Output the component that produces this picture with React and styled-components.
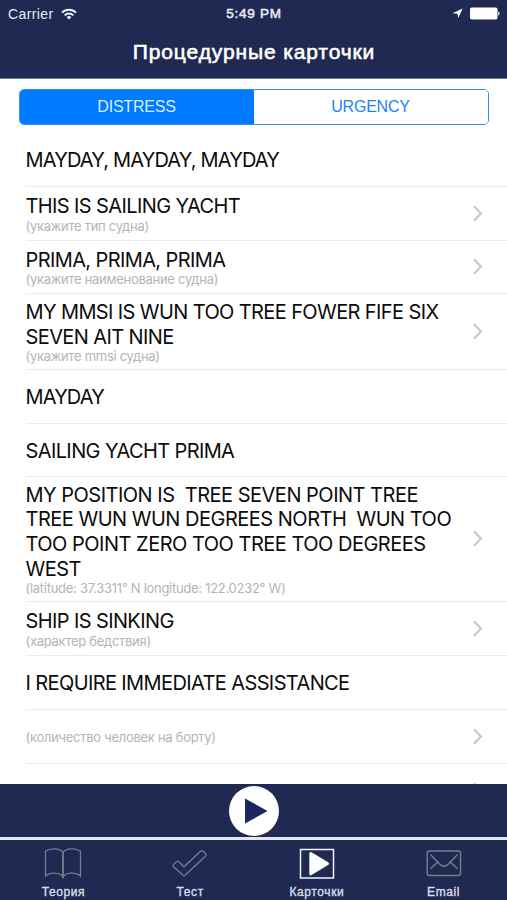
import React, { useState } from "react";
import styled, { createGlobalStyle } from "styled-components";

const GlobalStyle = createGlobalStyle`
  * {
    box-sizing: border-box;
  }
  body {
    margin: 0;
    background: #fff;
  }
  button {
    border: 0;
    margin: 0;
    padding: 0;
    background: none;
    font: inherit;
    color: inherit;
  }
`;

const Screen = styled.div`
  display: flex;
  flex-direction: column;
  width: 507px;
  height: 900px;
  overflow: hidden;
  background: #fff;
  font-family: "Liberation Sans", Arial, sans-serif;
`;

const Header = styled.header`
  flex: none;
  height: 79px;
  background: #202952;
  border-bottom: 1px solid #737894;
  color: #fff;
`;

const StatusBar = styled.div`
  display: grid;
  grid-template-columns: 1fr auto 1fr;
  align-items: center;
  height: 27px;
  padding: 0 7px 0 8px;
  font-size: 14px;
  color: #e9ebf3;
`;

const StatusSide = styled.div`
  display: flex;
  align-items: center;
  justify-content: ${(props) => (props.$end ? "flex-end" : "flex-start")};
  gap: 7px;
  letter-spacing: 0.4px;
`;

const Time = styled.div`
  font-size: 13.5px;
  letter-spacing: 0.75px;
  -webkit-text-stroke: 0.5px currentColor;
`;

const Title = styled.h1`
  margin: 0;
  padding: 13px 0 0 1px;
  text-align: center;
  font-size: 21px;
  line-height: 24px;
  font-weight: normal;
  letter-spacing: 0.88px;
  -webkit-text-stroke: 0.6px currentColor;
`;

const Segments = styled.div`
  flex: none;
  display: flex;
  height: 36px;
  margin: 10px 18px 7px 19px;
  border: 1px solid #2d8fff;
  border-radius: 5px;
  overflow: hidden;
`;

const Segment = styled.button`
  flex: 1;
  padding-right: 1px;
  font-size: 16px;
  line-height: 34px;
  letter-spacing: -0.2px;
  color: ${(props) => (props.$active ? "#d9ecff" : "#1f83f5")};
  background: ${(props) => (props.$active ? "#007aff" : "#fff")};
`;

const List = styled.main`
  flex: 1;
  min-height: 0;
  overflow: hidden;
  font-family: Inter, sans-serif;
`;

const CardRow = styled.div`
  display: flex;
  align-items: center;
  justify-content: space-between;
  height: ${(props) => props.$height}px;
  margin-left: 25.5px;
  padding-right: 24px;
  border-bottom: 1px solid #ebebed;
`;

const RowText = styled.div`
  padding-top: ${(props) => (props.$single ? 2 : 1)}px;
`;

const Phrase = styled.div`
  font-size: 20px;
  line-height: 24.6px;
  letter-spacing: ${(props) => props.$spacing}px;
  white-space: pre;
  color: #0c0c0c;
`;

const Hint = styled.div`
  min-height: 15px;
  font-size: 13px;
  line-height: 15px;
  letter-spacing: -0.28px;
  white-space: pre;
  color: #b4b4b6;
`;

const Player = styled.div`
  flex: none;
  display: flex;
  justify-content: center;
  height: 53px;
  padding-top: 2px;
  background: #202952;
`;

const PlayButton = styled.button`
  width: 50px;
  height: 50px;
  border-radius: 50%;
  background: #fff;

  svg {
    display: block;
  }
`;

const TabBar = styled.nav`
  flex: none;
  display: flex;
  height: 63px;
  padding-top: 6px;
  background: #202952;
  border-top: 3px solid #e4e6f2;
`;

const Tab = styled.button`
  flex: 1;
  display: flex;
  flex-direction: column;
  align-items: center;
  color: ${(props) => (props.$active ? "#fff" : "#777f8d")};

  svg {
    display: block;
  }
`;

const TabLabel = styled.span`
  margin-top: 5px;
  font-size: 12px;
  line-height: 14px;
  letter-spacing: 0.6px;
  color: #d9deec;
  -webkit-text-stroke: 0.35px currentColor;
`;

const WifiIcon = () => (
  <svg width="16" height="12" viewBox="0 0 16 12" fill="none" stroke="#eef0f7">
    <path d="M1 4.6a10 10 0 0 1 14 0" strokeWidth="1.8" />
    <path d="M3.6 7.3a6.3 6.3 0 0 1 8.8 0" strokeWidth="1.8" />
    <path d="M8 11.6 5.6 9.2a3.4 3.4 0 0 1 4.8 0z" fill="#eef0f7" stroke="none" />
  </svg>
);

const LocationIcon = () => (
  <svg width="11" height="11" viewBox="0 0 11 11">
    <path d="M10.6.5 6.3 10 5.5 5.7.6 5.3z" fill="#fff" />
  </svg>
);

const BatteryIcon = () => (
  <svg width="30" height="13" viewBox="0 0 30 13">
    <rect x="0" y="0.5" width="27.5" height="12" rx="1.8" fill="#fff" />
    <path d="M28.2 4.5c1.8.6 1.8 3.6 0 4.2z" fill="#fff" />
  </svg>
);

const Chevron = () => (
  <svg width="11" height="18" viewBox="0 0 11 18" fill="none" stroke="#c5c5c9" strokeWidth="2">
    <path d="M2 1.2 9 8.500l-7 7.300" />
  </svg>
);

const BookIcon = () => (
  <svg width="38" height="34" viewBox="0 0 38 34" fill="none" stroke="currentColor" strokeWidth="1.3">
    <path d="M19 6.500C16 1.800 6 1.800 1.500 5.200v25C6 26 16.500 26 19 31.500 21.500 26 32 26 36.500 30.200v-25C32 1.800 22 1.800 19 6.500z" />
    <path d="M19 6.500v25.500" strokeWidth="1.8" />
  </svg>
);

const CheckIcon = () => (
  <svg width="38" height="34" viewBox="0 0 38 34" fill="none" stroke="currentColor" strokeWidth="1.3" strokeLinejoin="round">
    <path d="M2.400 18.600 5.700 15.400Q6.600 14.700 7.500 15.500L13 20.800 29.800 5Q31 4.200 32 5.200L34.800 8Q35.600 9 34.700 9.900L14 29.200Q13 30 12 29.200L2.400 20.400Q1.600 19.500 2.400 18.600z" />
  </svg>
);

const CardsIcon = () => (
  <svg width="38" height="34" viewBox="0 0 38 34">
    <rect x="2.500" y="3.500" width="33" height="28.500" fill="none" stroke="#eef3fb" strokeWidth="1.5" />
    <path d="M11.300 7.500Q11.300 5.200 13.500 6.300L30.500 16.500Q31.800 17.700 30.500 18.800L13.500 29Q11.300 30.200 11.300 27.800z" fill="#fff" />
  </svg>
);

const MailIcon = () => (
  <svg width="38" height="34" viewBox="0 0 38 34" fill="none" stroke="currentColor" strokeWidth="1.4">
    <rect x="2.200" y="5" width="33.300" height="24.500" rx="2" />
    <path d="M5.500 8.500 14.500 18Q19 22.500 23.500 18L32.500 8.500M5.500 22.500l8-7M32.500 22.500l-8-7" />
  </svg>
);

const rows = [
  { text: "MAYDAY, MAYDAY, MAYDAY", height: 55, spacing: -0.85 },
  { text: "THIS IS SAILING YACHT", hint: "(укажите тип судна)", height: 54 },
  { text: "PRIMA, PRIMA, PRIMA", hint: "(укажите наименование судна)", height: 53 },
  {
    text: "MY MMSI IS WUN TOO TREE FOWER FIFE SIX\nSEVEN AIT NINE",
    hint: "(укажите mmsi судна)",
    height: 76,
  },
  { text: "MAYDAY", height: 54, spacing: -0.87 },
  { text: "SAILING YACHT PRIMA", height: 53 },
  {
    text:
      "MY POSITION IS  TREE SEVEN POINT TREE\nTREE WUN WUN DEGREES NORTH  WUN TOO\nTOO POINT ZERO TOO TREE TOO DEGREES\nWEST",
    hint: "(latitude: 37.3311° N longitude: 122.0232° W)",
    height: 125,
    spacing: -0.5,
  },
  { text: "SHIP IS SINKING", hint: "(характер бедствия)", height: 54 },
  { text: "I REQUIRE IMMEDIATE ASSISTANCE", height: 54 },
  { hint: "(количество человек на борту)", height: 54 },
  { text: " ", hint: " ", height: 54 },
];

const tabs = [
  { label: "Теория", icon: BookIcon },
  { label: "Тест", icon: CheckIcon },
  { label: "Карточки", icon: CardsIcon },
  { label: "Email", icon: MailIcon },
];

const App = () => {
  const [segment, setSegment] = useState("DISTRESS");
  const [tab, setTab] = useState("Карточки");

  return (
    <Screen>
      <GlobalStyle />
      <Header>
        <StatusBar>
          <StatusSide>
            Carrier <WifiIcon />
          </StatusSide>
          <Time>5:49 PM</Time>
          <StatusSide $end>
            <LocationIcon />
            <BatteryIcon />
          </StatusSide>
        </StatusBar>
        <Title>Процедурные карточки</Title>
      </Header>
      <Segments>
        {["DISTRESS", "URGENCY"].map((name) => (
          <Segment key={name} $active={segment === name} onClick={() => setSegment(name)}>
            {name}
          </Segment>
        ))}
      </Segments>
      <List>
        {rows.map((row, index) => (
          <CardRow key={index} $height={row.height}>
            <RowText $single={!row.hint}>
              {row.text && <Phrase $spacing={row.spacing || -0.61}>{row.text}</Phrase>}
              {row.hint && <Hint>{row.hint}</Hint>}
            </RowText>
            {row.hint && <Chevron />}
          </CardRow>
        ))}
      </List>
      <Player>
        <PlayButton aria-label="Play">
          <svg width="50" height="50" viewBox="0 0 50 50">
            <path d="M16 12.500 38.500 25 16 37.500z" fill="#1d2561" />
          </svg>
        </PlayButton>
      </Player>
      <TabBar>
        {tabs.map(({ label, icon: Icon }) => (
          <Tab key={label} $active={tab === label} onClick={() => setTab(label)}>
            <Icon />
            <TabLabel>{label}</TabLabel>
          </Tab>
        ))}
      </TabBar>
    </Screen>
  );
};

export default App;
